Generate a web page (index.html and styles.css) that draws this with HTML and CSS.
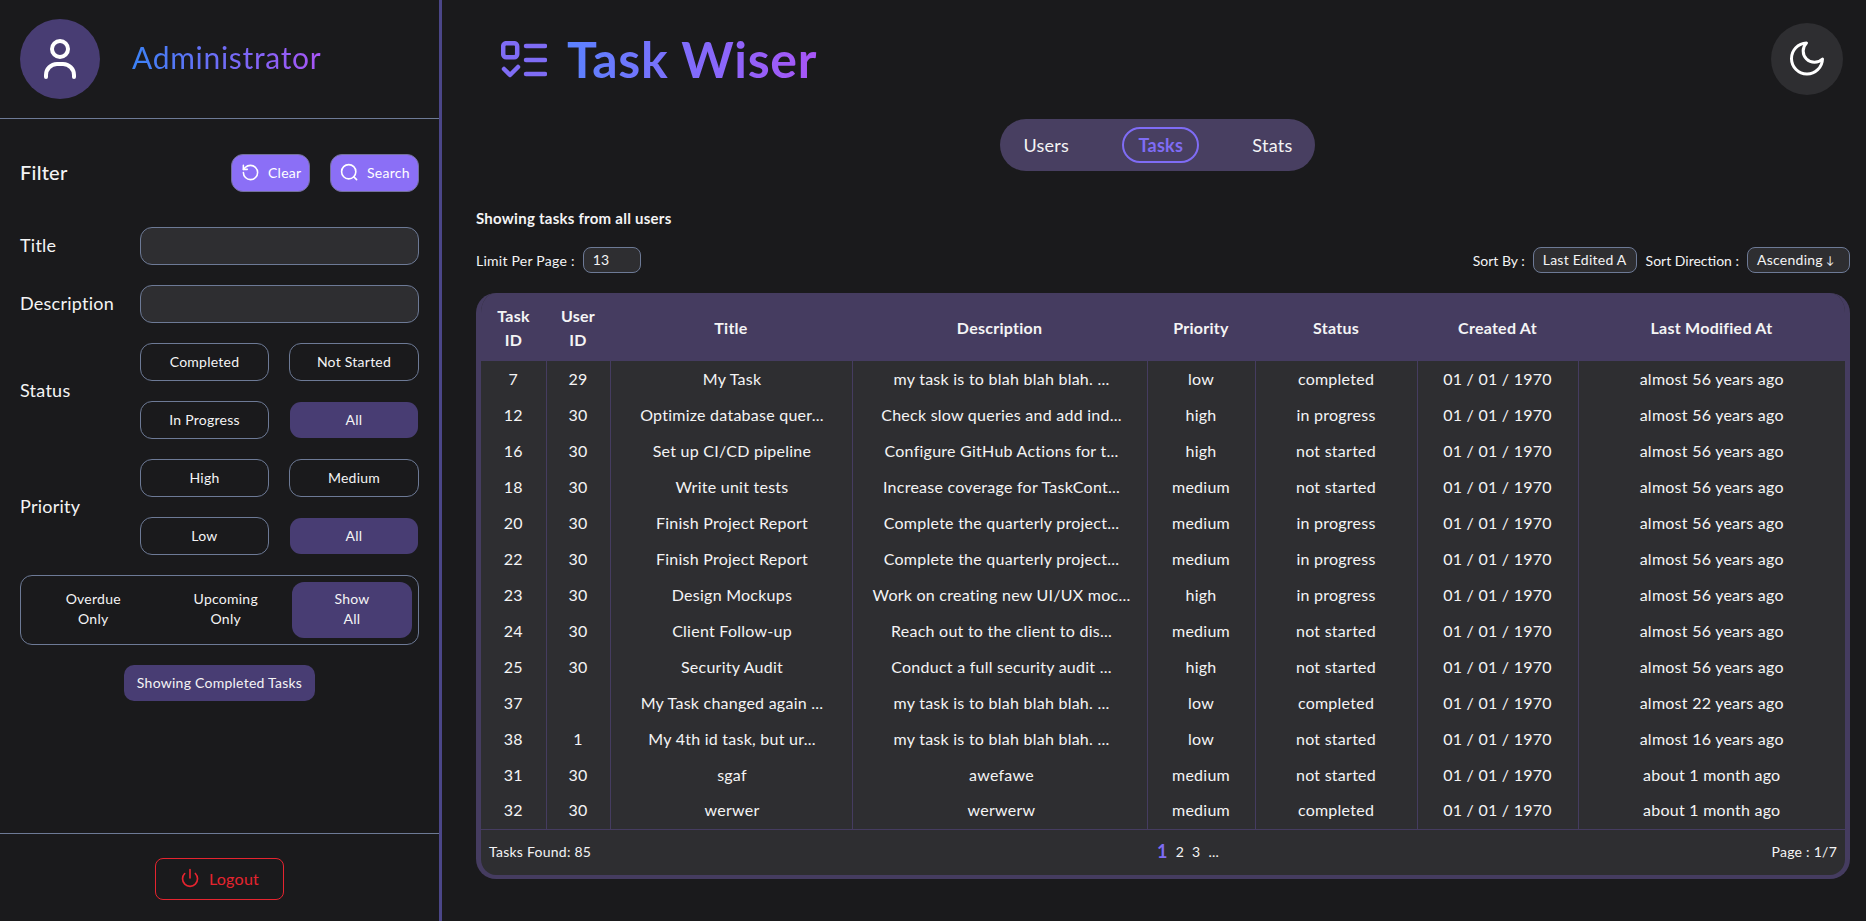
FILE: index.html
```html
<!DOCTYPE html>
<html>
  <head>
    <title>Task Wiser</title>
    <link rel="stylesheet" href="styles.css">
  </head>
  <body>
    <!-- Sidebar -->
    <aside class="sidebar">
      <div class="profile">
        <div class="avatar">
          <svg width="40" height="44" viewBox="0 0 40 44" fill="none" stroke="white" stroke-width="4" stroke-linecap="round">
            <circle cx="20" cy="12" r="8" />
            <path d="M6 40v-2a11 11 0 0 1 11-11h6a11 11 0 0 1 11 11v2" />
          </svg>
        </div>
        <span class="profile-name">Administrator</span>
      </div>

      <div class="filters">
        <div class="filter-head">
          <span class="filter-title">Filter</span>
          <div class="filter-actions">
            <button class="button-action button-clear">
              <svg width="19" height="19" viewBox="0 0 24 24" fill="none" stroke="white" stroke-width="2" stroke-linecap="round" stroke-linejoin="round">
                <path d="M3 12a9 9 0 1 0 9-9 9.75 9.75 0 0 0-6.74 2.74L3 8" />
                <path d="M3 3v5h5" />
              </svg>
              Clear
            </button>
            <button class="button-action button-search">
              <svg width="19" height="19" viewBox="0 0 24 24" fill="none" stroke="white" stroke-width="2" stroke-linecap="round" stroke-linejoin="round">
                <circle cx="11" cy="11" r="9" />
                <path d="M21 21l-3.5-3.5" />
              </svg>
              Search
            </button>
          </div>
        </div>

        <div class="filter-row">
          <label class="filter-label">Title</label>
          <input class="filter-input" type="text" />
        </div>
        <div class="filter-row">
          <label class="filter-label">Description</label>
          <input class="filter-input" type="text" />
        </div>
        <div class="filter-row">
          <label class="filter-label">Status</label>
          <div class="option-grid">
            <button class="option">Completed</button>
            <button class="option">Not Started</button>
            <button class="option">In Progress</button>
            <button class="option option-active">All</button>
          </div>
        </div>
        <div class="filter-row">
          <label class="filter-label">Priority</label>
          <div class="option-grid">
            <button class="option">High</button>
            <button class="option">Medium</button>
            <button class="option">Low</button>
            <button class="option option-active">All</button>
          </div>
        </div>

        <div class="due-toggle">
          <button class="due-option">Overdue<br />Only</button>
          <button class="due-option">Upcoming<br />Only</button>
          <button class="due-option due-active">Show<br />All</button>
        </div>

        <button class="completed-chip">Showing Completed Tasks</button>
      </div>

      <div class="sidebar-foot">
        <button class="button-logout">
          <svg width="20" height="20" viewBox="0 0 24 24" fill="none" stroke="#e5242f" stroke-width="2" stroke-linecap="round" stroke-linejoin="round">
            <path d="M12 2v10" />
            <path d="M18.4 6.6a9 9 0 1 1-12.77.04" />
          </svg>
          Logout
        </button>
      </div>
    </aside>

    <!-- Main -->
    <main class="main">
      <div class="topbar">
        <div class="brand">
          <svg class="brand-icon" width="46" height="37" viewBox="0 0 46 37" fill="none" stroke="#7f6cf5" stroke-width="4.5" stroke-linecap="round" stroke-linejoin="round">
            <rect x="2.2" y="2.2" width="14" height="14" rx="3" />
            <path d="M25 5h19M25 19h19M25 33h19" />
            <path d="M3 28l6 6 8-8" />
          </svg>
          <h1 class="brand-name">Task Wiser</h1>
        </div>
        <button class="theme-button">
          <svg width="36" height="36" viewBox="0 0 36 36" fill="none" stroke="white" stroke-width="3" stroke-linecap="round" stroke-linejoin="round">
            <path d="M17.5 2a15.5 15.5 0 1 0 16 16 10.5 10.5 0 0 1-16-16Z" />
          </svg>
        </button>
      </div>

      <nav class="tabs">
        <a class="tab">Users</a>
        <a class="tab tab-active">Tasks</a>
        <a class="tab">Stats</a>
      </nav>

      <div class="showing">Showing tasks from all users</div>

      <div class="table-controls">
        <div class="control">
          <span>Limit Per Page :</span>
          <input class="control-input limit-input" type="text" value="13" />
        </div>
        <div class="control">
          <span class="control-label">Sort By :</span>
          <span class="control-input">Last Edited A</span>
          <span class="control-label control-gap">Sort Direction :</span>
          <span class="control-input direction">Ascending <span class="arrow">↓</span></span>
        </div>
      </div>

      <div class="table-box">
        <table class="tasks">
          <colgroup>
            <col class="col-task" />
            <col class="col-user" />
            <col class="col-title" />
            <col class="col-desc" />
            <col class="col-priority" />
            <col class="col-status" />
            <col class="col-date" />
            <col />
          </colgroup>
          <thead>
            <tr>
              <th>Task<br />ID</th>
              <th>User<br />ID</th>
              <th>Title</th>
              <th>Description</th>
              <th>Priority</th>
              <th>Status</th>
              <th>Created At</th>
              <th>Last Modified At</th>
            </tr>
          </thead>
          <tbody>
            <tr><td>7</td><td>29</td><td>My Task</td><td>my task is to blah blah blah. ...</td><td>low</td><td>completed</td><td>01 / 01 / 1970</td><td>almost 56 years ago</td></tr>
            <tr><td>12</td><td>30</td><td>Optimize database quer...</td><td>Check slow queries and add ind...</td><td>high</td><td>in progress</td><td>01 / 01 / 1970</td><td>almost 56 years ago</td></tr>
            <tr><td>16</td><td>30</td><td>Set up CI/CD pipeline</td><td>Configure GitHub Actions for t...</td><td>high</td><td>not started</td><td>01 / 01 / 1970</td><td>almost 56 years ago</td></tr>
            <tr><td>18</td><td>30</td><td>Write unit tests</td><td>Increase coverage for TaskCont...</td><td>medium</td><td>not started</td><td>01 / 01 / 1970</td><td>almost 56 years ago</td></tr>
            <tr><td>20</td><td>30</td><td>Finish Project Report</td><td>Complete the quarterly project...</td><td>medium</td><td>in progress</td><td>01 / 01 / 1970</td><td>almost 56 years ago</td></tr>
            <tr><td>22</td><td>30</td><td>Finish Project Report</td><td>Complete the quarterly project...</td><td>medium</td><td>in progress</td><td>01 / 01 / 1970</td><td>almost 56 years ago</td></tr>
            <tr><td>23</td><td>30</td><td>Design Mockups</td><td>Work on creating new UI/UX moc...</td><td>high</td><td>in progress</td><td>01 / 01 / 1970</td><td>almost 56 years ago</td></tr>
            <tr><td>24</td><td>30</td><td>Client Follow-up</td><td>Reach out to the client to dis...</td><td>medium</td><td>not started</td><td>01 / 01 / 1970</td><td>almost 56 years ago</td></tr>
            <tr><td>25</td><td>30</td><td>Security Audit</td><td>Conduct a full security audit ...</td><td>high</td><td>not started</td><td>01 / 01 / 1970</td><td>almost 56 years ago</td></tr>
            <tr><td>37</td><td></td><td>My Task changed again ...</td><td>my task is to blah blah blah. ...</td><td>low</td><td>completed</td><td>01 / 01 / 1970</td><td>almost 22 years ago</td></tr>
            <tr><td>38</td><td>1</td><td>My 4th id task, but ur...</td><td>my task is to blah blah blah. ...</td><td>low</td><td>not started</td><td>01 / 01 / 1970</td><td>almost 16 years ago</td></tr>
            <tr><td>31</td><td>30</td><td>sgaf</td><td>awefawe</td><td>medium</td><td>not started</td><td>01 / 01 / 1970</td><td>about 1 month ago</td></tr>
            <tr><td>32</td><td>30</td><td>werwer</td><td>werwerw</td><td>medium</td><td>completed</td><td>01 / 01 / 1970</td><td>about 1 month ago</td></tr>
          </tbody>
        </table>
        <div class="table-foot">
          <span>Tasks Found: 85</span>
          <div class="pages">
            <span class="page-current">1</span>
            <span>2</span>
            <span>3</span>
            <span>...</span>
          </div>
          <span class="page-count">Page : 1/7</span>
        </div>
      </div>
    </main>
  </body>
</html>
```

FILE: styles.css
```css
* {
  box-sizing: border-box;
}
body {
  font-family: Lato, "Noto Sans", sans-serif;
  letter-spacing: 0.25px;
  margin: 0;
  height: 921px;
  display: flex;
  overflow: hidden;
  background-color: #1a1a1c;
  color: #f4f4f5;
}
button {
  font-family: inherit;
  letter-spacing: inherit;
  color: inherit;
  cursor: pointer;
  padding: 0 0 2px;
}

/* Sidebar */
.sidebar {
  width: 442px;
  flex-shrink: 0;
  display: flex;
  flex-direction: column;
  border-right: 3px solid #4b4688;
}
.profile {
  height: 119px;
  display: flex;
  align-items: center;
  gap: 32px;
  padding: 0 20px 1px;
  border-bottom: 1px solid #6d7a96;
}
.avatar {
  width: 80px;
  height: 80px;
  border-radius: 50%;
  background-color: #483d73;
  display: flex;
  align-items: center;
  justify-content: center;
}
.profile-name {
  font-size: 30px;
  letter-spacing: 0.7px;
  padding-bottom: 3px;
  background: linear-gradient(to right, #3b82f6, #a855f7);
  background-clip: text;
  -webkit-background-clip: text;
  color: transparent;
}
.filters {
  padding: 35px 20px 0 20px;
  display: flex;
  flex-direction: column;
  gap: 20px;
}
.filter-head {
  display: flex;
  align-items: center;
  justify-content: space-between;
  height: 38px;
  margin-bottom: 15px;
}
.filter-title {
  font-size: 20px;
  font-weight: 500;
  padding-bottom: 2px;
}
.filter-actions {
  display: flex;
  gap: 20px;
}
.button-action {
  height: 38px;
  padding: 0 0 2px 9px;
  display: flex;
  align-items: center;
  gap: 8px;
  font-size: 14px;
  border: 1px solid #74709c;
  border-radius: 12px;
  background-color: #8b6ff6;
  color: white;
}
.button-clear {
  width: 79px;
}
.button-search {
  width: 89px;
}
.filter-row {
  display: flex;
  align-items: center;
}
.filter-label {
  width: 120px;
  font-size: 18px;
  padding-bottom: 2px;
}
.filter-input {
  width: 279px;
  height: 38px;
  border: 1px solid #6d7a96;
  border-radius: 12px;
  background-color: #2e2e31;
}
.option-grid {
  width: 279px;
  display: grid;
  grid-template-columns: 129px 130px;
  justify-content: space-between;
  gap: 20px;
}
.option {
  height: 38px;
  font-size: 14px;
  border: 1px solid #6d7a96;
  border-radius: 12px;
  background: transparent;
}
.option-active {
  border-color: transparent;
  background-color: #483d73;
  background-clip: padding-box;
}
.due-toggle {
  height: 70px;
  display: grid;
  grid-template-columns: 1fr 1fr 120px;
  align-items: stretch;
  padding: 6px;
  border: 1px solid #6d7a96;
  border-radius: 12px;
}
.due-option {
  font-size: 14px;
  line-height: 20px;
  border: none;
  border-radius: 12px;
  background: transparent;
}
.due-active {
  background-color: #483d73;
}
.completed-chip {
  align-self: center;
  height: 36px;
  width: 191px;
  font-size: 14px;
  border: none;
  border-radius: 10px;
  background-color: #483d73;
}
.sidebar-foot {
  margin-top: auto;
  height: 88px;
  border-top: 1px solid #6d7a96;
  display: flex;
  justify-content: center;
  padding-top: 24px;
}
.button-logout {
  width: 129px;
  height: 42px;
  display: flex;
  align-items: center;
  justify-content: center;
  gap: 9px;
  font-size: 16px;
  color: #e5242f;
  border: 1px solid #e5242f;
  border-radius: 8px;
  background: transparent;
}

/* Main */
.main {
  flex: 1;
  min-width: 0;
  padding: 0 16px 0 34px;
  display: flex;
  flex-direction: column;
}
.topbar {
  height: 119px;
  display: flex;
  align-items: flex-start;
  justify-content: space-between;
  padding-left: 25px;
}
.brand {
  display: flex;
  align-items: center;
  gap: 20px;
  padding-top: 23px;
}
.brand-name {
  margin: 0;
  font-size: 50px;
  line-height: 72px;
  font-weight: 700;
  letter-spacing: 0.75px;
  background: linear-gradient(to right, #5b82ff, #a855f7);
  background-clip: text;
  -webkit-background-clip: text;
  color: transparent;
}
.theme-button {
  width: 72px;
  height: 72px;
  margin: 23px 7px 0 0;
  padding: 0;
  border: none;
  border-radius: 50%;
  background-color: #2e2e31;
  display: flex;
  align-items: center;
  justify-content: center;
}
.tabs {
  align-self: center;
  width: 315px;
  height: 52px;
  margin-right: 12px;
  display: flex;
  align-items: center;
  justify-content: space-between;
  padding: 0 22px 0 24px;
  border-radius: 26px;
  background-color: #483f61;
}
.tab {
  font-size: 18px;
  line-height: 32px;
  padding: 0 14px;
  margin: 0 -14px;
}
.tab-active {
  font-weight: 700;
  color: #7f6cf5;
  border: 2px solid #7f6cf5;
  border-radius: 18px;
  height: 36px;
}
.showing {
  margin-top: 38px;
  font-size: 15px;
  font-weight: 700;
}
.table-controls {
  margin-top: 20px;
  display: flex;
  justify-content: space-between;
  align-items: center;
  font-size: 14px;
}
.control {
  display: flex;
  align-items: center;
  gap: 8px;
}
.control-label {
  letter-spacing: 0;
}
.control-gap {
  margin-left: 1px;
}
.control-input {
  height: 26px;
  padding: 0 9px 2px;
  display: flex;
  align-items: center;
  font-size: 14px;
  color: #f4f4f5;
  border: 1px solid #6d7a96;
  border-radius: 8px;
  background-color: #2e2e31;
  font-family: inherit;
  letter-spacing: inherit;
}
.limit-input {
  width: 58px;
}
.direction {
  width: 103px;
}
.arrow {
  font-size: 11px;
  margin-left: 3px;
}
.table-box {
  margin-top: 20px;
  border-radius: 20px;
  overflow: hidden;
  background-color: #2e2e31;
  border: solid #453c60;
  border-width: 0 5px 4px;
}
.tasks {
  width: 100%;
  table-layout: fixed;
  border-collapse: collapse;
}
.col-task {
  width: 65px;
}
.col-user {
  width: 64px;
}
.col-title {
  width: 242px;
}
.col-desc {
  width: 295px;
}
.col-priority {
  width: 108px;
}
.col-status {
  width: 162px;
}
.col-date {
  width: 161px;
}
th {
  height: 68px;
  padding: 2px 0 0;
  font-size: 16px;
  line-height: 24px;
  font-weight: 700;
  background-color: #453c60;
}
td {
  height: 36px;
  padding: 0 0 2px;
  font-size: 16px;
  text-align: center;
  white-space: nowrap;
  border-left: 1px solid #453c60;
}
td:first-child {
  border-left: none;
}
td:nth-child(3) {
  padding-left: 2px;
}
td:nth-child(4) {
  padding-left: 4px;
}
tbody tr:last-child td {
  border-bottom: 1px solid #453c60;
}
.table-foot {
  height: 45px;
  display: grid;
  grid-template-columns: 1fr 1fr 1fr;
  align-items: center;
  padding: 0 8px 2px;
  font-size: 14px;
}
.pages {
  display: flex;
  align-items: center;
  justify-content: center;
  gap: 8px;
  margin-left: 50px;
}
.page-current {
  font-size: 18px;
  font-weight: 700;
  color: #7f6cf5;
}
.page-count {
  text-align: right;
}
```
